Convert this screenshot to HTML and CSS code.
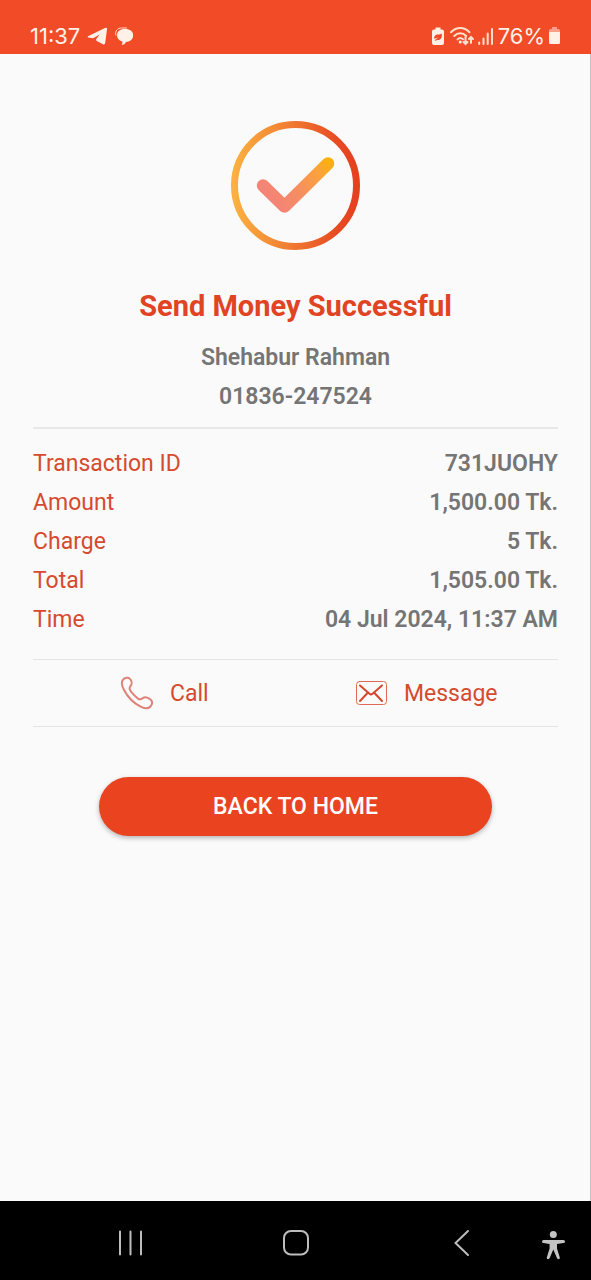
FILE: index.html
```html
<!DOCTYPE html>
<html lang="en">
<head>
<meta charset="utf-8">
<meta name="viewport" content="width=device-width, initial-scale=1">
<title>Send Money Successful</title>
<link rel="stylesheet" href="styles.css">
</head>
<body>
<header class="status">
  <div class="status-group status-left">
    <span class="status-text">11:37</span>
    <svg class="status-icon" width="21" height="20" viewBox="0 0 21 20" aria-hidden="true">
      <path d="M1 10.200 18 2q2.300-.8 2 1.200L18.200 17q-.4 2-2.200 1.200L9.800 15q-1.300-.8-.3-2.200L12.500 8.500 7.500 11.500q-1.400.9-2.800.6L1.200 11.500q-1.200-.5-.2-1.300Z"/>
    </svg>
    <svg class="status-icon" width="18" height="20" viewBox="1 0 18 20" aria-hidden="true">
      <path class="thin-line" d="M1.800 9C.8 5 3.500 2 7.500 2h5"/>
      <path d="M10.800 3c5.400 0 8.400 2.500 8.400 6.300s-3 6.300-7.200 6.600c-1 1.800-2.400 2.900-4.400 3.100.8-1.300 1-2.300.6-3.600C4.800 14.500 3 12.300 3 9.300 3 5.500 5.800 3 10.800 3Z"/>
    </svg>
  </div>
  <div class="status-group">
    <svg class="status-icon" width="14" height="20" viewBox="0 0 14 20" aria-hidden="true">
      <path d="M4.500 1.500h5v2H11a2 2 0 0 1 2 2V17a2 2 0 0 1-2 2H3a2 2 0 0 1-2-2V5.500a2 2 0 0 1 2-2h1.500Z"/>
      <path class="leaf" d="M3.400 13c-.7-3.200 1.200-4.700 3.600-4.600 1.600 0 2.500-.3 3.700-1 .8 4.400-1.200 7-4.300 6.500L3.500 15c1-1.800 2.200-2.600 4-3.300-1.500 0-2.800.3-4.100 1.300Z"/>
    </svg>
    <svg class="status-icon" width="26" height="20" viewBox="-2 0 26 20" aria-hidden="true">
      <g class="line">
        <path d="M1 6.200c5.500-5.500 13-5.500 18.500 0M4.200 10c3.700-3.700 8.500-3.700 12 0M7.500 13.400c1.700-1.700 3.700-1.700 5.500-.1"/>
        <path d="M15.500 11v7m-2-2 2 2 2-2M21 17v-6m-2 2 2-2 2 2"/>
      </g>
      <circle cx="10.200" cy="16" r="1.500"/>
    </svg>
    <svg class="status-icon" width="18" height="20" viewBox="1 0 18 20" aria-hidden="true">
      <path class="line" d="M3.200 16.500V18M7.500 12.500v5.500M11.700 7.500v10.500M16 3v15"/>
    </svg>
    <span class="status-text">76%</span>
    <svg class="status-icon" width="13" height="20" viewBox="0 0 13 20" aria-hidden="true">
      <path opacity=".5" d="M4 1h5v2h1.500Q12 3 12 4.500V6H1V4.500Q1 3 2.500 3H4Z"/>
      <path d="M1 6h11v10.500q0 1.500-1.500 1.500h-8Q1 18 1 16.500Z"/>
    </svg>
  </div>
</header>

<main class="receipt">
  <svg class="success" viewBox="0 0 130 130" role="img" aria-label="Success">
    <defs>
      <linearGradient id="ring" x1="0" y1="0" x2="1" y2="0">
        <stop offset="0" stop-color="#fbb040"/><stop offset=".4" stop-color="#f28233"/><stop offset=".85" stop-color="#e74a23"/><stop offset="1" stop-color="#e6401f"/>
      </linearGradient>
      <linearGradient id="tick" gradientUnits="userSpaceOnUse" x1="42" y1="80" x2="100" y2="40">
        <stop offset="0" stop-color="#f48476"/><stop offset=".35" stop-color="#f58d62"/><stop offset=".75" stop-color="#fba23c"/><stop offset="1" stop-color="#f9b208"/>
      </linearGradient>
    </defs>
    <circle cx="64.500" cy="65.500" r="61" fill="none" stroke="url(#ring)" stroke-width="7"/>
    <path d="M32 65.500 53.500 86.500 97 43.500" fill="none" stroke="url(#tick)" stroke-width="12.500" stroke-linecap="round" stroke-linejoin="round"/>
  </svg>
  <h1 class="title">Send Money Successful</h1>
  <p class="person">Shehabur Rahman<br>01836-247524</p>

  <dl class="details">
    <div class="row"><dt>Transaction ID</dt><dd>731JUOHY</dd></div>
    <div class="row"><dt>Amount</dt><dd>1,500.00 Tk.</dd></div>
    <div class="row"><dt>Charge</dt><dd>5 Tk.</dd></div>
    <div class="row"><dt>Total</dt><dd>1,505.00 Tk.</dd></div>
    <div class="row"><dt>Time</dt><dd>04 Jul 2024, 11:37 AM</dd></div>
  </dl>

  <div class="actions">
    <button class="action" type="button">
      <svg width="34" height="34" viewBox="0 0 34 34" aria-hidden="true">
        <path class="phone" d="M2.500 4.500C4 1.500 8.500.5 10.500 3.500c2.200 3.300 1.500 4.800-.3 7-1.400 1.800-.7 3.400 1.200 5.700 2 2.500 4 4.600 6.600 6.400 1.900 1.400 3.100.9 4.600-.3 2.500-2 5.400-.9 7.900 1.200 2.400 2 2 4.700-.1 7-1.800 2-5.400 2.200-8.800.6C14.500 27.800 7.500 21 3.500 13 1.800 9.600 1.200 7 2.500 4.500Z"/>
      </svg>
      Call
    </button>
    <button class="action" type="button">
      <svg width="32" height="34" viewBox="0 0 32 34" aria-hidden="true">
        <rect class="envelope" x="0.500" y="5.500" width="30" height="23" rx="3"/>
        <path class="flap" d="m4 9.500 9.500 8.300q1.500 1.300 3 0L26 9.500M4 25l7.500-8M26 25l-7.500-8"/>
      </svg>
      Message
    </button>
  </div>

  <button class="home" type="button">BACK TO HOME</button>
</main>

<nav class="navbar" aria-label="System">
  <div class="nav-main">
    <button class="nav-button" type="button" aria-label="Recent apps">
      <svg width="40" height="40" viewBox="0 0 40 40"><path d="M9 8.500v23M19.500 8.500v23M30 8.500v23"/></svg>
    </button>
    <button class="nav-button" type="button" aria-label="Home">
      <svg width="40" height="40" viewBox="0 0 40 40"><rect x="7" y="8" width="24" height="23.500" rx="7"/></svg>
    </button>
    <button class="nav-button" type="button" aria-label="Back">
      <svg width="40" height="40" viewBox="0 0 40 40"><path d="M26 8 13.500 20 26 32"/></svg>
    </button>
  </div>
  <button class="nav-button" type="button" aria-label="Accessibility">
    <svg width="40" height="40" viewBox="0 0 40 40">
      <g class="figure"><circle cx="19.300" cy="11.500" r="3.500"/>
      <path d="M9.500 17h20q1.500 0 1.500 1.500t-1.500 1.600L23 21v4.500l2.800 9q.3 1.500-1.200 1.700-1.300.1-1.800-1.400l-3.500-8.300-3.500 8.300q-.5 1.500-1.800 1.400-1.500-.2-1.200-1.700l2.800-9V21l-6.100-.9Q8 20 8 18.500T9.500 17Z"/></g>
    </svg>
  </button>
</nav>
</body>
</html>
```
FILE: styles.css
```css
* {
  box-sizing: border-box;
}

body {
  display: flex;
  flex-direction: column;
  min-height: 100vh;
  margin: 0;
  background: #fafafa;
  color: #757575;
  font-family: Roboto, sans-serif;
  font-size: 23px;
}

button {
  padding: 0;
  border: 0;
  background: none;
  font: inherit;
  cursor: pointer;
}

svg {
  display: block;
  flex: none;
}

.status {
  display: flex;
  justify-content: space-between;
  padding: 22px 30px 4px;
  background: #f24b28;
  color: #fff1e8;
}

.status-group {
  display: flex;
  align-items: center;
  gap: 3px;
}

.status-left {
  gap: 7px;
}

.status-text {
  font-family: Inter, sans-serif;
  font-size: 22px;
  line-height: 28px;
}

.status-icon {
  fill: #fff1e8;
}

.status-icon .line,
.status-icon .thin-line {
  fill: none;
  stroke: #ffe0cc;
  stroke-width: 2;
  stroke-linecap: round;
}

.status-icon .thin-line {
  stroke-width: 1;
}

.status-icon .leaf {
  fill: #f24b28;
}

.receipt {
  display: flex;
  flex: 1;
  flex-direction: column;
  padding: 66px 32px 48px 33px;
  border-right: 1px solid #c4c4c4;
}

.success {
  align-self: center;
  width: 130px;
}

.title {
  margin: 36px 0 0;
  color: #e04423;
  font-size: 29px;
  font-weight: 700;
  line-height: 40px;
  text-align: center;
}

.person {
  margin: 12px 0 0;
  font-weight: 600;
  line-height: 39px;
  text-align: center;
}

.details {
  margin: 11px 0 0;
  padding: 15px 0 20px;
  border-top: 2px solid #e8e8e8;
}

.row {
  display: flex;
  justify-content: space-between;
  line-height: 39px;
}

.row dt {
  color: #d64a2e;
}

.row dd {
  margin: 0;
  font-weight: 600;
}

.actions {
  display: grid;
  grid-template-columns: 1fr 1fr;
  border-top: 1px solid #e4e4e4;
  border-bottom: 1px solid #e4e4e4;
}

.action {
  display: flex;
  align-items: center;
  justify-content: center;
  gap: 16px;
  height: 66px;
  color: #d64a2e;
}

.action svg {
  fill: none;
  stroke-linecap: round;
  stroke-linejoin: round;
}

.phone {
  stroke: #df8278;
  stroke-width: 2;
}

.envelope {
  stroke: #df6a55;
  stroke-width: 1;
}

.flap {
  stroke: #d4482d;
  stroke-width: 2;
}

.home {
  align-self: center;
  width: 75%;
  margin-top: 50px;
  border-radius: 30px;
  background: #ea431f;
  box-shadow: 0 2px 5px rgb(0 0 0 / 28%);
  color: #fff;
  font-weight: 500;
  line-height: 59px;
}

.navbar {
  display: flex;
  align-items: center;
  gap: 52px;
  padding: 22px 17px 17px 111px;
  background: #000;
}

.nav-main {
  display: flex;
  flex: 1;
  justify-content: space-between;
}

.nav-button svg {
  fill: none;
  stroke: #bdbdbd;
  stroke-width: 2;
  stroke-linecap: round;
}

.nav-button .figure {
  fill: #c4c4c4;
  stroke: none;
}
```
